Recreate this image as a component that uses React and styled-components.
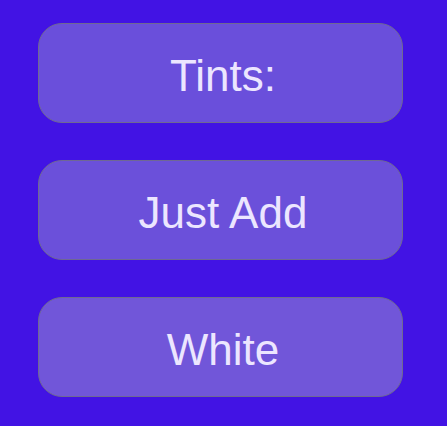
import React from 'react';
import styled, { createGlobalStyle } from 'styled-components';

const GlobalStyle = createGlobalStyle`
  html, body {
    margin: 0;
    padding: 0;
    background: #4213e4;
  }
`;

const Page = styled.div`
  width: 447px;
  height: 426px;
  box-sizing: border-box;
  padding: 23px 44px 0 38px;
  display: flex;
  flex-direction: column;
  gap: 37px;
  background: #4213e4;
`;

const Card = styled.div`
  height: 100px;
  box-sizing: border-box;
  border: 1px solid #6f6893;
  border-radius: 24px;
  background: ${p => p.$fill};
  display: flex;
  align-items: center;
  justify-content: center;
  padding: 5px 0 0 5px;
  color: #ece6ff;
  font-family: "Liberation Sans", Arial, sans-serif;
  font-size: 44px;
`;

const items = [
  { label: 'Tints:', fill: '#6a4fdb' },
  { label: 'Just Add', fill: '#6b50da' },
  { label: 'White', fill: '#7156d9' },
];

export default function App() {
  return (
    <>
      <GlobalStyle />
      <Page>
        {items.map(item => (
          <Card key={item.label} $fill={item.fill}>{item.label}</Card>
        ))}
      </Page>
    </>
  );
}
